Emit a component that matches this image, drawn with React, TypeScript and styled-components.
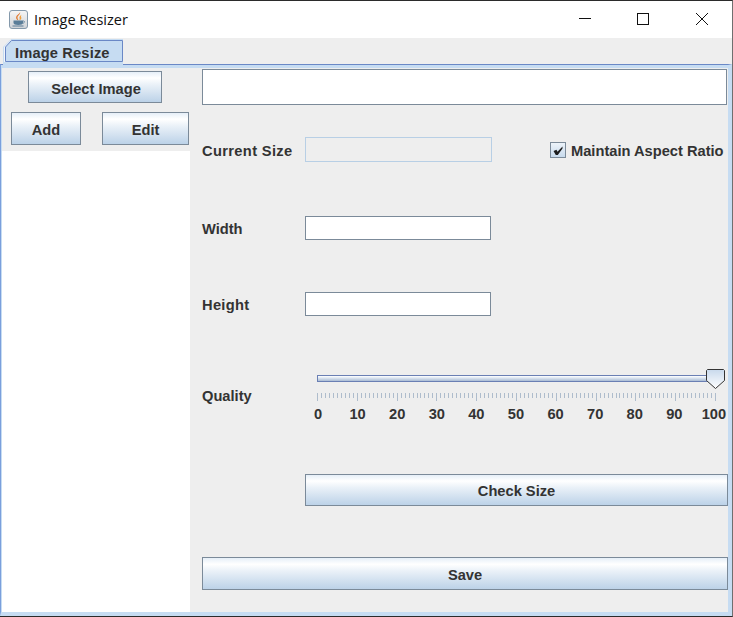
import React from 'react';
import styled, { createGlobalStyle } from 'styled-components';

const GlobalStyle = createGlobalStyle`
  html, body {
    margin: 0;
    padding: 0;
    background: #eeeeee;
  }
  * {
    box-sizing: border-box;
  }
`;

const Frame = styled.div`
  width: 733px;
  height: 617px;
  display: flex;
  flex-direction: column;
  background: #eeeeee;
  border-top: 1px solid #2b2b2b;
  border-bottom: 1px solid #2b2b2b;
  border-right: 1px solid #6f6f6f;
  font-family: "Liberation Sans", Arial, sans-serif;
  font-size: 14.67px;
  font-weight: bold;
  color: #333333;
  overflow: hidden;
`;

const TitleBar = styled.div`
  height: 37px;
  flex: none;
  display: flex;
  align-items: center;
  background: #ffffff;
  padding-left: 9px;
`;

const AppIcon = styled.svg`
  width: 19px;
  height: 19px;
  flex: none;
`;

const WindowTitle = styled.span`
  margin-left: 6px;
  font-family: "Open Sans", "Noto Sans", sans-serif;
  font-size: 14.5px;
  font-weight: normal;
  color: #111111;
`;

const WindowControls = styled.div`
  margin-left: auto;
  display: flex;
`;

const ControlIcon = styled.svg`
  width: 58px;
  height: 37px;
  display: block;
`;

const TabStrip = styled.div`
  height: 26px;
  flex: none;
  padding: 1px 0 0 3px;
  display: flex;
`;

const Tab = styled.div`
  width: 120px;
  height: 29px;
  padding: 6px 0 0 12px;
  line-height: 16px;
  letter-spacing: 0.15px;
  position: relative;
  z-index: 1;
`;

const TabOutline = styled.svg`
  position: absolute;
  top: 0;
  left: 0;
  width: 120px;
  height: 29px;
  z-index: -1;
`;

const TabPane = styled.div`
  flex: 1;
  min-height: 0;
  display: flex;
  border-top: 1px solid #6a88c6;
  border-left: 1px solid #7a9fdc;
  border-right: 4px solid #c6dcf2;
  border-bottom: 4px solid #c6dcf2;
  box-shadow: inset 1px 3px 0 #c6dcf2;
  padding: 3px 0 0 1px;
`;

const Sidebar = styled.div`
  width: 188px;
  flex: none;
  display: flex;
  flex-direction: column;
`;

const SidebarTools = styled.div`
  height: 83px;
  flex: none;
  display: grid;
  grid-template-columns: 70px 87px;
  grid-template-rows: 32px 33px;
  justify-content: space-between;
  column-gap: 21px;
  row-gap: 9px;
  padding: 3px 1px 0 9px;
`;

const Button = styled.button`
  display: block;
  width: 100%;
  height: 100%;
  padding: 2px 0 0;
  border: 1px solid #7b8a99;
  background: linear-gradient(to bottom, #e6eff8 0%, #ffffff 20%, #eaf1f8 42%, #bcd2e8 100%);
  font: inherit;
  color: #333333;
`;

const SelectButton = styled(Button)`
  grid-column: 1 / span 2;
  width: 134px;
  justify-self: start;
  margin-left: 17px;
  padding: 4px 0 0 2px;
`;

const ImageList = styled.div`
  flex: 1;
  background: #ffffff;
`;

const Main = styled.div`
  flex: 1;
  min-width: 0;
  display: flex;
  flex-direction: column;
  padding: 1px 0 0 12px;
`;

const PathField = styled.div`
  height: 36px;
  margin-right: 1px;
  background: #ffffff;
  border: 1px solid #7b8a99;
`;

const Row = styled.div<{ $top: number }>`
  display: grid;
  grid-template-columns: 103px 187px 1fr;
  align-items: center;
  margin-top: ${(p) => p.$top}px;
`;

const RowLabel = styled.span<{ $spacing?: number }>`
  padding-top: 2px;
  letter-spacing: ${(p) => p.$spacing ?? 0}px;
  white-space: nowrap;
`;

const SizeField = styled.div<{ $disabled?: boolean }>`
  height: ${(p) => (p.$disabled ? 25 : 24)}px;
  width: ${(p) => (p.$disabled ? 187 : 186)}px;
  background: ${(p) => (p.$disabled ? '#eeeeee' : '#ffffff')};
  border: 1px solid ${(p) => (p.$disabled ? '#b8cfe5' : '#7b8a99')};
`;

const AspectOption = styled.div`
  display: flex;
  align-items: center;
  gap: 5px;
  margin-left: 58px;
  white-space: nowrap;
`;

const AspectText = styled.span`
  padding-top: 2px;
`;

const CheckBox = styled.svg`
  width: 16px;
  height: 16px;
  flex: none;
`;

const QualityRow = styled.div`
  display: flex;
  margin-top: 53px;
`;

const QualityLabel = styled.div`
  width: 115px;
  flex: none;
  margin-top: 19px;
  line-height: 16px;
`;

const Slider = styled.div`
  width: 408px;
  flex: none;
  position: relative;
  padding-top: 6px;
`;

const Track = styled.div`
  height: 7px;
  width: 398px;
  border: 1px solid #6a7fb4;
  border-right: none;
  background: linear-gradient(to bottom, #ffffff 0%, #e4ecf5 30%, #a9bbd4 100%);
`;

const Thumb = styled.svg`
  position: absolute;
  top: 0;
  left: 389px;
  width: 19px;
  height: 20px;
`;

const Ticks = styled.svg`
  display: block;
  width: 408px;
  height: 9px;
  margin-top: 11px;
`;

const TickLabels = styled.div`
  display: flex;
  justify-content: space-between;
  width: 396px;
  margin: 4px 0 0 1px;
  line-height: 16px;
`;

const TickLabel = styled.span`
  width: 0;
  display: flex;
  justify-content: center;
`;

const CheckRow = styled.div`
  height: 32px;
  margin: 52px 0 0 103px;
`;

const SaveRow = styled.div`
  height: 33px;
  margin-top: 51px;
`;

const labels = [0, 10, 20, 30, 40, 50, 60, 70, 80, 90, 100];

const App: React.FC = () => {
  return (
    <Frame>
      <GlobalStyle />
      <TitleBar>
        <AppIcon viewBox="0 0 19 19">
          <defs>
            <linearGradient id="iconBg" x1="0" y1="0" x2="0" y2="1">
              <stop offset="0" stopColor="#f6f6f6" />
              <stop offset="1" stopColor="#cfd2d6" />
            </linearGradient>
          </defs>
          <rect x="0.5" y="0.5" width="18" height="18" rx="2.5" fill="url(#iconBg)" stroke="#8499ab" />
          <path d="M11 2c1 2.500-3 3.500-2.500 6 .2 1 .8 1.500.8 2.500C7.500 9.500 6.500 8 7.500 6 8.500 4.200 11 4 11 2z" fill="#e2762a" />
          <path d="M13 4.500c-1.500 1-3 2-2.500 3.500.3.800.3 1.500-.2 2.500 2-1 2.500-2.200 1.800-3.500-.4-.8 0-1.700.9-2.500z" fill="#f0a03c" />
          <path d="M4.500 10.500h9.500v2c0 1.800-2 2.500-4.800 2.500s-4.700-.7-4.700-2.500z" fill="#5a7d98" />
          <path d="M14 11c2-.4 2.200 1.800-.5 2.500" fill="none" stroke="#5a7d98" strokeWidth="0.8" />
          <path d="M3.500 16h11" stroke="#5a7d98" strokeWidth="1" />
        </AppIcon>
        <WindowTitle>Image Resizer</WindowTitle>
        <WindowControls>
          <ControlIcon viewBox="0 0 58 37">
            <path d="M21 17.500h12" stroke="#111111" fill="none" />
          </ControlIcon>
          <ControlIcon viewBox="0 0 58 37">
            <rect x="21.500" y="12.500" width="11" height="11" stroke="#111111" fill="none" />
          </ControlIcon>
          <ControlIcon viewBox="0 0 58 37">
            <path d="M22 12l12 12M34 12L22 24" stroke="#111111" fill="none" />
          </ControlIcon>
        </WindowControls>
      </TitleBar>
      <TabStrip>
        <Tab>
          <TabOutline viewBox="0 0 120 29">
            <path d="M.5 29V8L8 .5H120V29z" fill="#f2f6fb" stroke="#c6dcf2" />
            <path d="M2.500 22.500V8L8.500 1.500H119.500V22.500z" fill="#c6dcf2" stroke="#6a88c6" />
            <rect x="0" y="23" width="120" height="6" fill="#c6dcf2" />
          </TabOutline>
          Image Resize
        </Tab>
      </TabStrip>
      <TabPane>
        <Sidebar>
          <SidebarTools>
            <SelectButton>Select Image</SelectButton>
            <Button>Add</Button>
            <Button>Edit</Button>
          </SidebarTools>
          <ImageList />
        </Sidebar>
        <Main>
          <PathField />
          <Row $top={32}>
            <RowLabel $spacing={0.35}>Current Size</RowLabel>
            <SizeField $disabled />
            <AspectOption>
              <CheckBox viewBox="0 0 16 16">
                <defs>
                  <linearGradient id="checkBg" x1="0" y1="0" x2="0" y2="1">
                    <stop offset="0" stopColor="#eef4fa" />
                    <stop offset="1" stopColor="#c6d9ec" />
                  </linearGradient>
                </defs>
                <rect x="0.500" y="0.500" width="15" height="15" fill="url(#checkBg)" stroke="#7b8a99" />
                <path d="M3.500 9l3-1.200 1 2L12.500 4.500V6.500L7.800 13H5.800z" fill="#1c1c1c" />
              </CheckBox>
              <AspectText>Maintain Aspect Ratio</AspectText>
            </AspectOption>
          </Row>
          <Row $top={54}>
            <RowLabel>Width</RowLabel>
            <SizeField />
          </Row>
          <Row $top={52}>
            <RowLabel $spacing={0.3}>Height</RowLabel>
            <SizeField />
          </Row>
          <QualityRow>
            <QualityLabel>Quality</QualityLabel>
            <Slider>
              <Track />
              <Thumb viewBox="0 0 19 20">
                <defs>
                  <linearGradient id="thumbBg" x1="0" y1="0" x2="0" y2="1">
                    <stop offset="0" stopColor="#c8d9ec" />
                    <stop offset="1" stopColor="#ffffff" />
                  </linearGradient>
                </defs>
                <path d="M1.500.500h16l1 1v10l-9 8-9-8v-10z" fill="url(#thumbBg)" stroke="#333333" />
              </Thumb>
              <Ticks viewBox="0 0 408 9">
                {Array.from({ length: 101 }, (_, i) => {
                  const x = Math.round(i * 3.98) + 0.5;
                  return (
                    <line key={i} x1={x} x2={x} y1={0} y2={i % 10 === 0 ? 8 : 5} stroke="#aebccc" />
                  );
                })}
              </Ticks>
              <TickLabels>
                {labels.map((n) => (
                  <TickLabel key={n}>{n}</TickLabel>
                ))}
              </TickLabels>
            </Slider>
          </QualityRow>
          <CheckRow>
            <Button>Check Size</Button>
          </CheckRow>
          <SaveRow>
            <Button>Save</Button>
          </SaveRow>
        </Main>
      </TabPane>
    </Frame>
  );
};

export default App;
